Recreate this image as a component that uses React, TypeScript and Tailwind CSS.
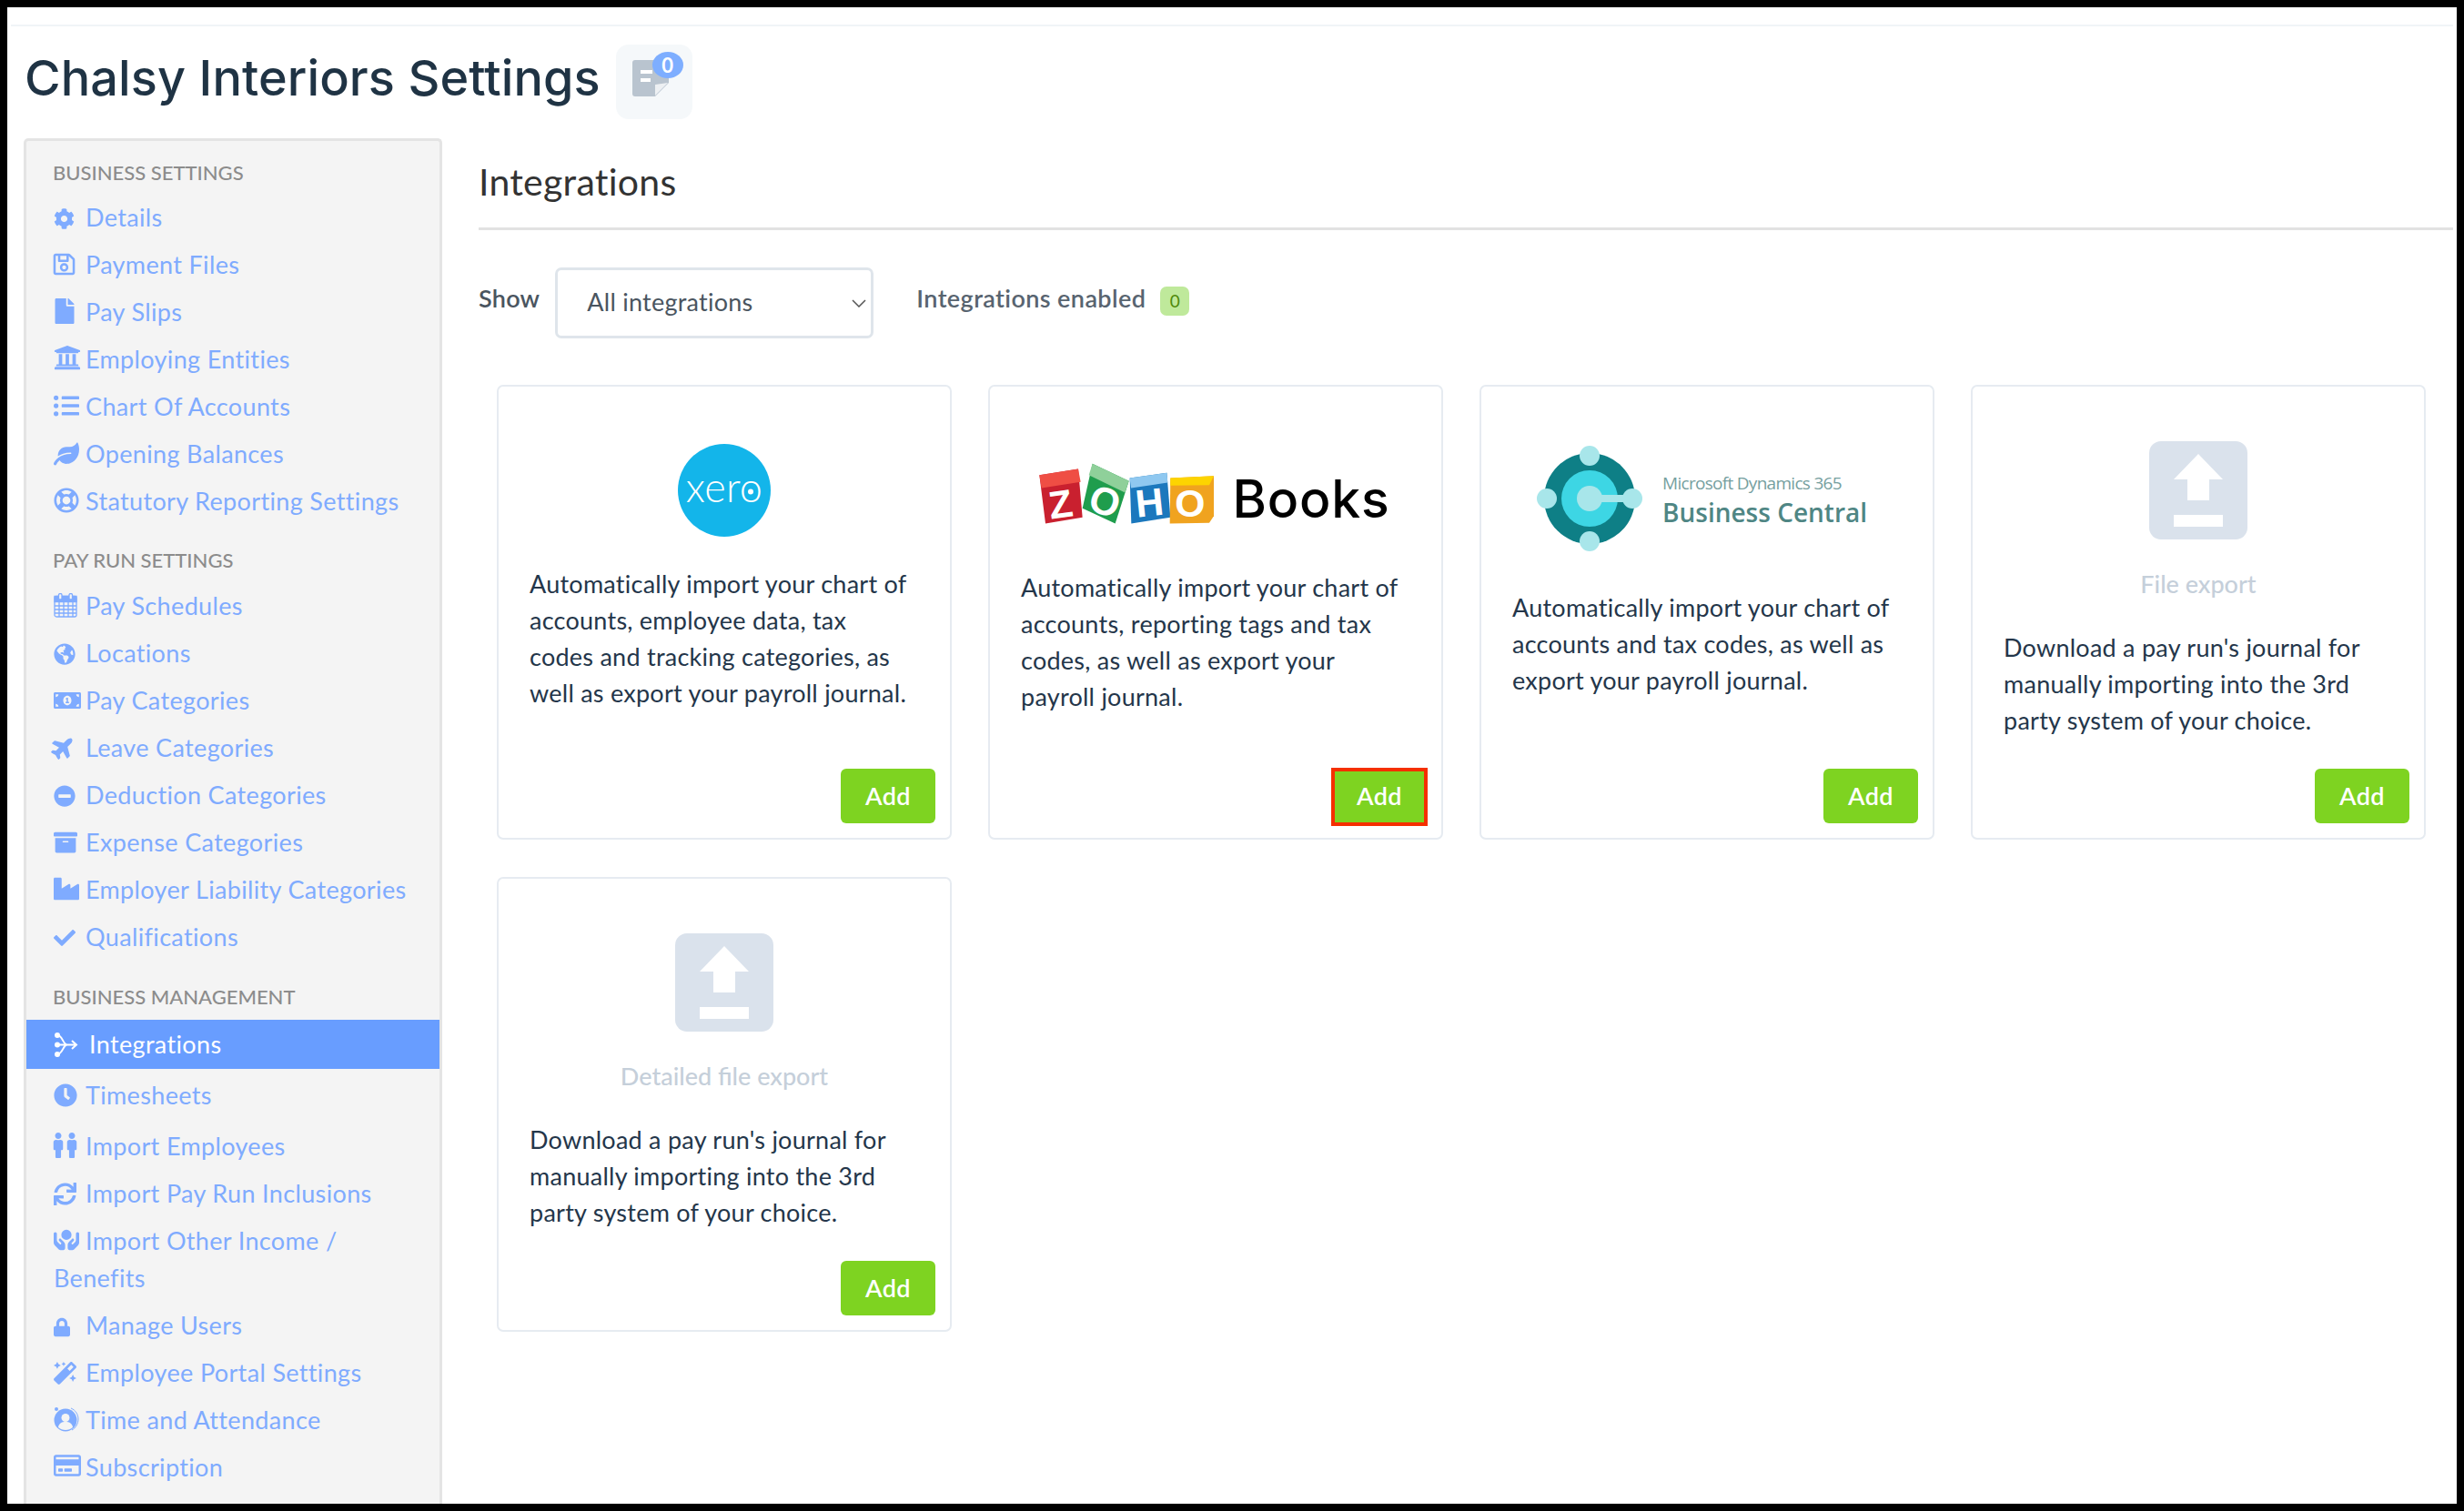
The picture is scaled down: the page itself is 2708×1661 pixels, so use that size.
import type { ReactNode } from "react";
import {
  FaArchive,
  FaCheck,
  FaClock,
  FaCog,
  FaFile,
  FaGlobeAmericas,
  FaIndustry,
  FaLeaf,
  FaListUl,
  FaLock,
  FaMagic,
  FaMale,
  FaMinusCircle,
  FaMoneyBillAlt,
  FaPlane,
  FaRegCreditCard,
  FaRegLifeRing,
  FaRegSave,
  FaSync,
  FaUniversity,
} from "react-icons/fa";
import { FaHandsHoldingCircle } from "react-icons/fa6";

const font = "font-['Lato','Liberation_Sans',sans-serif]";

function IntegrationsIcon() {
  return (
    <svg viewBox="0 0 27 29" className="w-[27px] h-[29px]" fill="none" stroke="#fff" strokeWidth="2">
      <circle cx="4" cy="4" r="3" fill="#fff" stroke="none" />
      <circle cx="4" cy="14.5" r="3" fill="#fff" stroke="none" />
      <circle cx="4" cy="25" r="3" fill="#fff" stroke="none" />
      <path d="M4 4c6 0 6 10.500 11 10.500M4 25c6 0 6-10.500 11-10.500M4 14.500h21M20 10l5 4.500-5 4.500" />
    </svg>
  );
}

function CalendarIcon() {
  return (
    <svg viewBox="0 0 26 27" className="w-[26px] h-[27px]" fill="none" stroke="#7fabff" strokeWidth="1.300">
      <rect x="1" y="3.500" width="24" height="22.500" rx="2" />
      <path d="M1 3.500h24v6H1z" fill="#7fabff" />
      <path d="M1 14h24M1 18h24M1 22h24M6 9v17M11 9v17M16 9v17M21 9v17" />
      <rect x="5.500" y="0.500" width="3.500" height="6.500" rx="1.500" fill="#f4f4f4" />
      <rect x="17" y="0.500" width="3.500" height="6.500" rx="1.500" fill="#f4f4f4" />
    </svg>
  );
}

function AttendanceIcon() {
  return (
    <svg viewBox="0 0 28 28" className="w-[28px] h-[28px]" fill="#7fabff">
      <circle cx="13" cy="15" r="12.500" />
      <circle cx="13" cy="12.500" r="4.500" fill="#f4f4f4" />
      <path d="M5 23c1-5 4-6 8-6s7 1 8 6c-2 2-5 3-8 3s-6-1-8-3z" fill="#f4f4f4" />
      <circle cx="3" cy="3" r="2" />
      <path d="M19 2c5 2 8 7 8 12s-3 10-7 12" fill="none" stroke="#7fabff" strokeWidth="1" />
    </svg>
  );
}

type Item = { label: string; icon: ReactNode; rowClass?: string };

const businessSettings: Item[] = [
  { label: "Details", icon: <FaCog className="w-[23px] h-[23px]" /> },
  { label: "Payment Files", icon: <FaRegSave className="w-[27px] h-[27px] -ml-[2px]" /> },
  { label: "Pay Slips", icon: <FaFile className="w-[24px] h-[28px]" /> },
  { label: "Employing Entities", icon: <FaUniversity className="w-[30px] h-[30px]" /> },
  { label: "Chart Of Accounts", icon: <FaListUl className="w-[28px] h-[28px]" /> },
  { label: "Opening Balances", icon: <FaLeaf className="w-[28px] h-[26px]" /> },
  { label: "Statutory Reporting Settings", icon: <FaRegLifeRing className="w-[28px] h-[28px]" /> },
];

const payRunSettings: Item[] = [
  { label: "Pay Schedules", icon: <CalendarIcon /> },
  { label: "Locations", icon: <FaGlobeAmericas className="w-[24px] h-[24px]" /> },
  { label: "Pay Categories", icon: <FaMoneyBillAlt className="w-[30px] h-[26px]" /> },
  { label: "Leave Categories", icon: <FaPlane className="w-[27px] h-[27px] -ml-[3px] -rotate-45" /> },
  { label: "Deduction Categories", icon: <FaMinusCircle className="w-[24px] h-[24px]" /> },
  { label: "Expense Categories", icon: <FaArchive className="w-[26px] h-[26px]" /> },
  { label: "Employer Liability Categories", icon: <FaIndustry className="w-[28px] h-[28px]" /> },
  { label: "Qualifications", icon: <FaCheck className="w-[24px] h-[24px]" /> },
];

const managementAfter: Item[] = [
  { label: "Timesheets", icon: <FaClock className="w-[26px] h-[26px]" />, rowClass: "mb-[4px]" },
  {
    label: "Import Employees",
    icon: (
      <span className="flex -ml-[3px] -space-x-[1px]">
        <FaMale className="w-[16px] h-[28px]" />
        <FaMale className="w-[16px] h-[28px]" />
      </span>
    ),
  },
  { label: "Import Pay Run Inclusions", icon: <FaSync className="w-[25px] h-[25px]" /> },
  { label: "Import Other Income / Benefits", icon: <FaHandsHoldingCircle className="w-[28px] h-[28px]" /> },
  { label: "Manage Users", icon: <FaLock className="w-[18px] h-[22px]" /> },
  { label: "Employee Portal Settings", icon: <FaMagic className="w-[25px] h-[25px]" /> },
  { label: "Time and Attendance", icon: <AttendanceIcon /> },
  { label: "Subscription", icon: <FaRegCreditCard className="w-[30px] h-[30px]" /> },
];

function SectionTitle({ children, className }: { children: ReactNode; className: string }) {
  return (
    <div className={`h-[30px] leading-[30px] pl-[29px] text-[22px] font-medium tracking-normal text-[#8c8c8c] ${className}`}>
      {children}
    </div>
  );
}

function NavRow({ item }: { item: Item }) {
  return (
    <a className={`block pl-[30px] pr-[28px] pb-[11px] text-[27px] leading-[41px] tracking-[0.35px] text-[#7fabff] ${item.rowClass ?? ""}`}>
      <span className="inline-flex w-[35px] h-[28px] items-center align-[-3px]">{item.icon}</span>
      {item.label}
    </a>
  );
}

function Sidebar() {
  return (
    <aside className="w-[460px] shrink-0 h-[1600px] bg-[#f4f4f4] border-x-[3px] border-t-[3px] border-[#e4e4e4] rounded-t-[5px] pt-[20px]">
      <SectionTitle className="mb-[13px]">BUSINESS SETTINGS</SectionTitle>
      {businessSettings.map((item) => (
        <NavRow key={item.label} item={item} />
      ))}
      <SectionTitle className="mt-[19px] mb-[14px]">PAY RUN SETTINGS</SectionTitle>
      {payRunSettings.map((item) => (
        <NavRow key={item.label} item={item} />
      ))}
      <SectionTitle className="mt-[20px] mb-[10px]">BUSINESS MANAGEMENT</SectionTitle>
      <a className="flex items-center h-[54px] pl-[30px] mb-[8px] bg-[#689dff] text-white text-[27px] tracking-[0.35px]">
        <span className="flex w-[39px] items-center">
          <IntegrationsIcon />
        </span>
        Integrations
      </a>
      {managementAfter.map((item) => (
        <NavRow key={item.label} item={item} />
      ))}
    </aside>
  );
}

function XeroLogo() {
  return (
    <svg viewBox="0 0 102 102" className="w-[102px] h-[102px]">
      <circle cx="51" cy="51" r="51" fill="#13b5ea" />
      <text x="51" y="64" textAnchor="middle" fontFamily="Lato, sans-serif" fontSize="45" fontWeight="300" fill="#fff">
        xero
      </text>
      <circle cx="80" cy="52.500" r="3" fill="#fff" />
    </svg>
  );
}

function ZohoLogo() {
  return (
    <div className="flex items-center gap-[16px] mr-[6px]">
      <svg viewBox="120 110 600 215" className="w-[200px] h-[72px]">
        <path d="M130 155 258 135 272 295 150 315Z" fill="#c9202f" />
        <path d="M130 155 258 135 266 178 137 198Z" fill="#ef4e44" />
        <path d="M305 118 425 175 380 315 272 265Z" fill="#1f9d4d" />
        <path d="M305 118 425 175 412 213 293 155Z" fill="#8fd09a" />
        <path d="M428 165 550 148 562 295 433 315Z" fill="#1b78bd" />
        <path d="M428 165 550 148 553 180 432 198Z" fill="#8fc8f0" />
        <path d="M562 165 705 158 705 290 690 313 560 315Z" fill="#f0a31f" />
        <path d="M562 165 705 158 690 188 562 190Z" fill="#fdd400" />
        <g fontFamily="Liberation Sans, sans-serif" fontWeight="700" fontSize="128" fill="#fff" textAnchor="middle">
          <text x="200" y="296" transform="rotate(-8 200 250)">Z</text>
          <text x="347" y="286" transform="rotate(18 347 240)">O</text>
          <text x="493" y="290" transform="rotate(-6 493 245)">H</text>
          <text x="627" y="292">O</text>
        </g>
      </svg>
      <span className="pt-[10px] text-[57px] leading-none font-medium text-black font-['Inter',sans-serif] tracking-[0.8px]">Books</span>
    </div>
  );
}

function BusinessCentralLogo() {
  return (
    <div className="flex items-center gap-[22px] ml-[61px]">
      <svg viewBox="0 0 116 116" className="w-[116px] h-[116px] shrink-0">
        <circle cx="58" cy="58" r="50" fill="#0e7f86" />
        <circle cx="58" cy="58" r="31" fill="#3dd6e4" />
        <path d="M58 58h48" stroke="#a8e6ea" strokeWidth="8" />
        <circle cx="58" cy="58" r="14" fill="#a8e6ea" />
        <circle cx="58" cy="11" r="11" fill="#a8e6ea" />
        <circle cx="58" cy="105" r="11" fill="#a8e6ea" />
        <circle cx="11" cy="58" r="11" fill="#a8e6ea" />
        <circle cx="105" cy="58" r="11" fill="#a8e6ea" />
      </svg>
      <div className="font-['Open_Sans',sans-serif] whitespace-nowrap tracking-normal">
        <div className="text-[19px] leading-[30px] text-[#76a0a0] tracking-[-0.7px]">Microsoft Dynamics 365</div>
        <div className="text-[28px] leading-[34px] font-semibold text-[#4f8684]">Business Central</div>
      </div>
    </div>
  );
}

function ExportIcon() {
  return (
    <svg viewBox="0 0 108 108" className="w-[108px] h-[108px]">
      <rect width="108" height="108" rx="13" fill="#dae2ec" />
      <path d="M54 14 81 42H66V65H42V42H27Z M27 81H81V94H27Z" fill="#fff" />
    </svg>
  );
}

function ExportHeader({ label }: { label: string }) {
  return (
    <div className="flex flex-col items-center">
      <ExportIcon />
      <div className="mt-[34px] text-[27px] leading-[30px] font-medium tracking-normal text-[#c5cfda]">{label}</div>
    </div>
  );
}

const exportText = "Download a pay run's journal for\nmanually importing into the 3rd\nparty system of your choice.";

const cards: { id: string; top: ReactNode; topClass: string; text: string; marked?: boolean }[] = [
  {
    id: "xero",
    top: <XeroLogo />,
    topClass: "h-[197px] pt-[63px] justify-center",
    text: "Automatically import your chart of\naccounts, employee data, tax\ncodes and tracking categories, as\nwell as export your payroll journal.",
  },
  {
    id: "zoho",
    top: <ZohoLogo />,
    topClass: "h-[201px] pt-[82px] justify-center",
    text: "Automatically import your chart of\naccounts, reporting tags and tax\ncodes, as well as export your\npayroll journal.",
    marked: true,
  },
  {
    id: "business-central",
    top: <BusinessCentralLogo />,
    topClass: "h-[223px] pt-[65px] justify-start",
    text: "Automatically import your chart of\naccounts and tax codes, as well as\nexport your payroll journal.",
  },
  { id: "file", top: <ExportHeader label="File export" />, topClass: "h-[267px] pt-[60px] justify-center", text: exportText },
  { id: "detailed", top: <ExportHeader label="Detailed file export" />, topClass: "h-[267px] pt-[60px] justify-center", text: exportText },
];

function AddButton({ marked }: { marked?: boolean }) {
  return (
    <div className="relative self-end mt-auto mr-[16px] mb-[16px]">
      <button className="block w-[104px] h-[60px] rounded-[6px] bg-[#7ed321] text-white text-[27px] font-semibold tracking-[0.5px]">Add</button>
      {marked && <div className="absolute -left-[1px] -top-[1px] -right-[1px] -bottom-[3px] border-[4px] border-[#f52f00]" />}
    </div>
  );
}

function Card({ card }: { card: (typeof cards)[number] }) {
  return (
    <div className="h-[500px] flex flex-col border-2 border-[#e6ebf1] rounded-[7px] bg-white">
      <div className={`flex items-start shrink-0 ${card.topClass}`}>{card.top}</div>
      <p className="px-[34px] text-[27px] leading-[40px] text-[#24364a] whitespace-pre-line">{card.text}</p>
      <AddButton marked={card.marked} />
    </div>
  );
}

function Main() {
  return (
    <main className="flex-1 ml-[40px] mr-[4px]">
      <div className="pt-[23px] pb-[25px] border-b-[3px] border-[#e2e2e2]">
        <h2 className="text-[41px] leading-[50px] text-[#333]">Integrations</h2>
      </div>
      <div className="flex items-start mt-[41px]">
        <span className="mt-[17px] text-[27px] leading-[34px] font-semibold text-[#4a5560]">Show</span>
        <div className="relative ml-[17px]">
          <select className="block w-[350px] h-[78px] pl-[32px] pb-[2px] appearance-none border-[3px] border-[#dfe5eb] rounded-[7px] bg-white text-[27px] text-[#4a5560]">
            <option>All integrations</option>
          </select>
          <svg viewBox="0 0 16 9" className="absolute right-[8px] top-[35px] w-[16px] h-[9px]" fill="none" stroke="#555" strokeWidth="1.500">
            <path d="M1 1l7 7 7-7" />
          </svg>
        </div>
        <span className="ml-[47px] mt-[17px] text-[27px] leading-[34px] font-semibold tracking-[0.4px] text-[#586470]">Integrations enabled</span>
        <span className="ml-[16px] mt-[21px] flex items-center justify-center w-[32px] h-[32px] rounded-[7px] bg-[#bfe99b] text-[19px] text-[#4f8a0b]">0</span>
      </div>
      <div className="grid grid-cols-[repeat(4,500px)] gap-x-[40px] gap-y-[41px] ml-[20px] mt-[51px]">
        {cards.map((card) => (
          <Card key={card.id} card={card} />
        ))}
      </div>
    </main>
  );
}

export default function App() {
  return (
    <div className={`h-[1661px] bg-black p-2 tracking-[0.25px] ${font}`}>
      <div className="h-full bg-white overflow-hidden">
        <div className="mt-[19px] ml-[4px] mr-[4px] h-[2px] bg-[#f0f4f7]" />
        <div className="h-[102px] pt-[20px] pl-[19px] flex items-start">
          <h1 className="-mt-[4px] text-[54px] leading-[82px] font-medium tracking-[0.1px] text-[#1f3344] font-['Inter',sans-serif]">Chalsy Interiors Settings</h1>
          <div className="relative ml-[17px] w-[84px] h-[82px] rounded-[14px] bg-[#f5f8fa]">
            <svg viewBox="0 0 40 40" className="absolute left-[18px] top-[17px] w-[40px] h-[40px]">
              <path d="M3 0h34a3 3 0 0 1 3 3v22L25 40H3a3 3 0 0 1-3-3V3a3 3 0 0 1 3-3z" fill="#b9c4cf" />
              <path d="M9 11h13v4H9zM9 20h11v4H9z" fill="#fff" />
              <path d="M25 27l14-2-14 14z" fill="#fff" opacity="0.75" />
            </svg>
            <span className="absolute left-[40px] top-[8px] w-[34px] h-[29px] rounded-[50%] bg-[#7eaeff] flex items-center justify-center text-white text-[22px] font-bold">0</span>
          </div>
        </div>
        <div className="flex pl-[18px] pt-[21px]">
          <Sidebar />
          <Main />
        </div>
      </div>
    </div>
  );
}
